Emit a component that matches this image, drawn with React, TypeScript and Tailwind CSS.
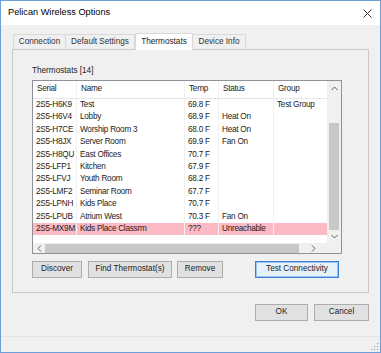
import React from "react";

const rows = [
  ["2S5-H6K9", "Test", "69.8 F", "", "Test Group"],
  ["2S5-H6V4", "Lobby", "68.9 F", "Heat On", ""],
  ["2S5-H7CE", "Worship Room 3", "68.0 F", "Heat On", ""],
  ["2S5-H8JX", "Server Room", "69.9 F", "Fan On", ""],
  ["2S5-H8QU", "East Offices", "70.7 F", "", ""],
  ["2S5-LFP1", "Kitchen", "67.9 F", "", ""],
  ["2S5-LFVJ", "Youth Room", "68.2 F", "", ""],
  ["2S5-LMF2", "Seminar Room", "67.7 F", "", ""],
  ["2S5-LPNH", "Kids Place", "70.7 F", "", ""],
  ["2S5-LPUB", "Atrium West", "70.3 F", "Fan On", ""],
  ["2S5-MX9M", "Kids Place Classrm", "???", "Unreachable", ""],
];

const widths = ["w-[44px]", "w-[108px]", "w-[34px]", "w-[55px]", "w-[53px]"];

function Cell({ w, children, last }: { w: string; children: React.ReactNode; last?: boolean }) {
  return (
    <div className={`${w} shrink-0 h-full flex items-center pl-[3px] overflow-hidden whitespace-nowrap tracking-[-0.25px] ${last ? "" : "border-r border-[#f0f0f0]"}`}>
      {children}
    </div>
  );
}

function Btn({ children, w, def }: { children: React.ReactNode; w: string; def?: boolean }) {
  return (
    <div
      className={`${w} h-[17px] flex items-center justify-center border ${
        def ? "border-[#3a7fd0] bg-[#e5f1fb] ring-1 ring-inset ring-[#9cc3ee]" : "border-[#adadad] bg-[#e1e1e1]"
      }`}
    >
      {children}
    </div>
  );
}

export default function App() {
  return (
    <div
      className="w-[381px] h-[353px] border border-[#6c9fd7] flex flex-col text-[8.2px] text-[#1b1b1b] overflow-hidden"
      style={{ fontFamily: '"Liberation Sans", Arial, sans-serif' }}
    >
      {/* Title bar */}
      <div className="h-[24px] bg-white flex items-center justify-between pl-[7px] pr-[7px] shrink-0">
        <span className="text-[9.2px] text-black">Pelican Wireless Options</span>
        <svg width="9" height="9" viewBox="0 0 9 9" className="mr-[1px]">
          <path d="M0.5 0.5 L8.5 8.5 M8.5 0.5 L0.5 8.5" stroke="#222" strokeWidth="0.9" />
        </svg>
      </div>

      {/* Body */}
      <div className="flex-1 bg-[#f0f0f0] flex flex-col">
        <div className="pt-[7px] pl-[11px] pr-[11px]">
          {/* Tabs */}
          <div className="flex items-end h-[17px] pl-[1px]">
            <div className="h-[15px] w-[53px] border border-b-0 border-[#d9d9d9] bg-[#f0f0f0] flex items-center justify-center text-[#333]">Connection</div>
            <div className="h-[15px] w-[69px] border border-l-0 border-b-0 border-[#d9d9d9] bg-[#f0f0f0] flex items-center justify-center text-[#333]">Default Settings</div>
            <div className="h-[17px] w-[58px] border border-b-0 border-[#d9d9d9] bg-white flex items-center justify-center -mb-px relative z-10">Thermostats</div>
            <div className="h-[15px] w-[53px] border border-l-0 border-b-0 border-[#d9d9d9] bg-[#f0f0f0] flex items-center justify-center text-[#333]">Device Info</div>
          </div>
          {/* Panel */}
          <div className="h-[244px] border border-[#c9c9c9] bg-[#f0f0f0] pl-[19px] pr-[24px] pt-[15px]">
            <div className="h-[15px] text-[#222]">Thermostats [14]</div>
            {/* List */}
            <div className="h-[174px] w-[310px] border border-[#8f9399] bg-white flex flex-col">
              <div className="flex h-[162px]">
                <div className="w-[294px] flex flex-col">
                  <div className="h-[18px] flex border-b border-[#e5e5e5]">
                    {["Serial", "Name", "Temp", "Status", "Group"].map((h, i) => (
                      <Cell key={h} w={widths[i]} last={i === 4}>
                        <span className="pl-[1px]">{h}</span>
                      </Cell>
                    ))}
                  </div>
                  {rows.map((r, ri) => (
                    <div
                      key={r[0]}
                      className={`h-[12.4px] flex ${ri === 10 ? "bg-[#fbbac4]" : ""}`}
                    >
                      {r.map((c, i) => (
                        <Cell key={i} w={widths[i]} last={i === 4}>
                          {c}
                        </Cell>
                      ))}
                    </div>
                  ))}
                </div>
                {/* Vertical scrollbar */}
                <div className="w-[14px] bg-[#f0f0f0] flex flex-col items-center">
                  <div className="h-[14px] flex items-center justify-center">
                    <svg width="7" height="5" viewBox="0 0 7 5">
                      <path d="M0.5 4 L3.5 1 L6.5 4" stroke="#606060" strokeWidth="1" fill="none" />
                    </svg>
                  </div>
                  <div className="h-[28px]" />
                  <div className="w-[10px] h-[107px] bg-[#c8c8c8]" />
                  <div className="flex-1 flex items-center justify-center">
                    <svg width="7" height="5" viewBox="0 0 7 5">
                      <path d="M0.5 1 L3.5 4 L6.5 1" stroke="#606060" strokeWidth="1" fill="none" />
                    </svg>
                  </div>
                </div>
              </div>
              {/* Horizontal scrollbar */}
              <div className="flex-1 flex bg-[#f0f0f0]">
                <div className="w-[294px] flex items-center">
                  <div className="w-[12px] flex items-center justify-center">
                    <svg width="5" height="7" viewBox="0 0 5 7">
                      <path d="M4 0.5 L1 3.5 L4 6.5" stroke="#606060" strokeWidth="1" fill="none" />
                    </svg>
                  </div>
                  <div className="w-[254px] h-[9px] bg-[#c8c8c8]" />
                  <div className="flex-1 flex items-center justify-center">
                    <svg width="5" height="7" viewBox="0 0 5 7">
                      <path d="M1 0.5 L4 3.5 L1 6.5" stroke="#606060" strokeWidth="1" fill="none" />
                    </svg>
                  </div>
                </div>
                <div className="w-[14px] bg-[#f0f0f0]" />
              </div>
            </div>
            {/* Buttons */}
            <div className="flex mt-[7px]">
              <Btn w="w-[50px]">Discover</Btn>
              <div className="w-[6px]" />
              <Btn w="w-[84px]">Find Thermostat(s)</Btn>
              <div className="w-[5px]" />
              <Btn w="w-[46px]">Remove</Btn>
              <div className="w-[32px]" />
              <Btn w="w-[84px]" def>Test Connectivity</Btn>
            </div>
          </div>
        </div>

        {/* OK / Cancel */}
        <div className="flex justify-end pr-[11px] mt-[11px]">
          <Btn w="w-[53px]">OK</Btn>
          <div className="w-[6px]" />
          <Btn w="w-[55px]">Cancel</Btn>
        </div>

        {/* Status bar */}
        <div className="mt-auto h-[16px] border-t border-[#e3e3e3] bg-[#f0f0f0] flex justify-end items-end pr-[1px] pb-[1px]">
          <svg width="8" height="8" viewBox="0 0 8 8">
            <rect x="6" y="0" width="1.2" height="1.2" fill="#a0a0a0" />
            <rect x="3" y="3" width="1.2" height="1.2" fill="#a0a0a0" />
            <rect x="6" y="3" width="1.2" height="1.2" fill="#a0a0a0" />
            <rect x="0" y="6" width="1.2" height="1.2" fill="#a0a0a0" />
            <rect x="3" y="6" width="1.2" height="1.2" fill="#a0a0a0" />
            <rect x="6" y="6" width="1.2" height="1.2" fill="#a0a0a0" />
          </svg>
        </div>
      </div>
    </div>
  );
}
